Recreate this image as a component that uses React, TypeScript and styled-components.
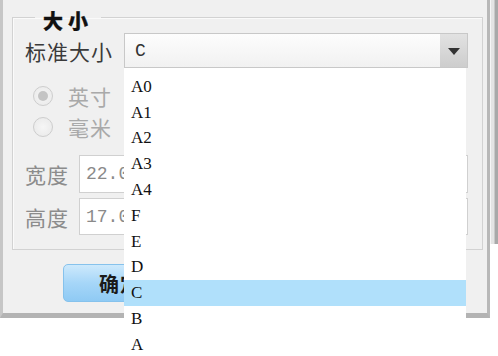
import React from "react";
import styled, { createGlobalStyle } from "styled-components";

const GlobalStyle = createGlobalStyle`
  html, body { margin: 0; padding: 0; background: #ffffff; }
  body { font-family: "Noto Sans CJK SC", "Noto Sans", sans-serif; }
  * { box-sizing: border-box; }
`;

const Page = styled.div`
  position: relative;
  width: 498px;
  height: 356px;
  overflow: hidden;
  background: #ffffff;
  display: flex;
  align-items: flex-start;
`;

const Dialog = styled.div`
  width: 490px;
  height: 318px;
  flex: none;
  background: #f0f0f0;
  border-left: 3px solid #c6c6c6;
  border-right: 3px solid #b8b8b8;
  border-bottom: 5px solid #b3b3b3;
  padding: 3px 4px 0 9px;
  display: flex;
  flex-direction: column;
`;

const BackFrame = styled.div`
  width: 8px;
  height: 244px;
  flex: none;
  background: linear-gradient(90deg, #f6f6f6 0 1px, #e4e4e4 1px 4px, #c9c9c9 4px 5px, #a9a9a9 5px);
`;

const Group = styled.fieldset`
  margin: 0;
  border: 1px solid #d2d2d2;
  box-shadow: inset 1px 1px 0 #fafafa;
  padding: 2px 14px 14px 12px;
  display: flex;
  flex-direction: column;
  min-width: 0;
`;

const Legend = styled.legend`
  margin-left: 10px;
  padding: 8px 8px 0 8px;
  font-size: 20px;
  line-height: 20px;
  font-weight: 900;
  letter-spacing: 5px;
  color: #111;
  -webkit-text-stroke: 0.3px #111;
`;

const Row = styled.div<{ $h: number; $mt?: number }>`
  display: flex;
  align-items: center;
  height: ${(p) => p.$h}px;
  margin-top: ${(p) => p.$mt ?? 0}px;
`;

const Label = styled.span<{ $w: number; $muted?: boolean }>`
  width: ${(p) => p.$w}px;
  flex: none;
  font-size: 21px;
  letter-spacing: 1px;
  color: ${(p) => (p.$muted ? "#8c8c8c" : "#3a3a3a")};
  white-space: nowrap;
`;

const Combo = styled.div`
  flex: 1;
  height: 100%;
  display: flex;
  border: 1px solid #c8c8c8;
  background: linear-gradient(#fdfdfd, #f1f1f1);
`;

const ComboValue = styled.span`
  flex: 1;
  padding-left: 10px;
  display: flex;
  align-items: center;
  font-family: "Liberation Mono", monospace;
  font-size: 18px;
  color: #333;
`;

const ComboButton = styled.span`
  width: 27px;
  flex: none;
  display: flex;
  align-items: center;
  justify-content: center;
  background: linear-gradient(#e2e2e2, #cdcdcd);
`;

const Arrow = styled.span`
  width: 0;
  height: 0;
  border-left: 6px solid transparent;
  border-right: 6px solid transparent;
  border-top: 7px solid #333;
  margin-top: 2px;
`;

const RadioRow = styled.label`
  display: flex;
  align-items: center;
  height: 31px;
  padding-left: 8px;
  gap: 15px;
`;

const RadioCircle = styled.span<{ $checked?: boolean }>`
  width: 20px;
  height: 20px;
  flex: none;
  border-radius: 50%;
  border: 1px solid #cdcdcd;
  background: radial-gradient(circle, #f6f6f6 0%, #e8e8e8 100%);
  display: flex;
  align-items: center;
  justify-content: center;
  &::after {
    content: "";
    width: 10px;
    height: 10px;
    border-radius: 50%;
    background: ${(p) => (p.$checked ? "#c4c4c4" : "transparent")};
  }
`;

const RadioText = styled.span`
  font-size: 21px;
  letter-spacing: 1px;
  color: #a9a9a9;
`;

const Field = styled.div`
  flex: 1;
  height: 100%;
  border: 1px solid #d0d0d0;
  background: #ffffff;
  padding-left: 6px;
  display: flex;
  align-items: center;
  font-family: "Liberation Mono", monospace;
  font-size: 18px;
  color: #8a8a8a;
`;

const ButtonBar = styled.div`
  display: flex;
  gap: 18px;
  padding-left: 51px;
  margin-top: 14px;
`;

const Button = styled.button`
  width: 114px;
  height: 38px;
  border: 1px solid #86c2ec;
  border-radius: 5px;
  background: linear-gradient(#cde9fc, #a6d6f8 50%, #8fcaf4);
  font-family: "Noto Sans CJK SC", sans-serif;
  font-size: 20px;
  font-weight: 700;
  color: #1a1a1a;
  letter-spacing: 1px;
  padding: 0;
`;

const List = styled.ul`
  position: absolute;
  left: 124px;
  top: 68px;
  width: 342px;
  height: 300px;
  margin: 0;
  padding: 6px 0 0 0;
  list-style: none;
  background: #ffffff;
`;

const Item = styled.li<{ $selected?: boolean }>`
  height: 25.8px;
  padding-left: 7px;
  display: flex;
  align-items: center;
  font-family: "Liberation Serif", serif;
  font-size: 17px;
  color: #111;
  background: ${(p) => (p.$selected ? "#b0e0fb" : "transparent")};
`;

const sizes = ["A0", "A1", "A2", "A3", "A4", "F", "E", "D", "C", "B", "A"];

export default function App() {
  return (
    <>
      <GlobalStyle />
      <Page>
        <Dialog>
          <Group>
            <Legend>大小</Legend>
            <Row $h={35}>
              <Label $w={99}>标准大小</Label>
              <Combo>
                <ComboValue>C</ComboValue>
                <ComboButton>
                  <Arrow />
                </ComboButton>
              </Combo>
            </Row>
            <Row $h={12} />
            <RadioRow>
              <RadioCircle $checked />
              <RadioText>英寸</RadioText>
            </RadioRow>
            <RadioRow>
              <RadioCircle />
              <RadioText>毫米</RadioText>
            </RadioRow>
            <Row $h={38} $mt={13}>
              <Label $w={54} $muted>宽度</Label>
              <Field>22.00</Field>
            </Row>
            <Row $h={37} $mt={5}>
              <Label $w={54} $muted>高度</Label>
              <Field>17.00</Field>
            </Row>
          </Group>
          <ButtonBar>
            <Button>确定</Button>
            <Button>取消</Button>
          </ButtonBar>
        </Dialog>
        <BackFrame />
        <List>
          {sizes.map((s) => (
            <Item key={s} $selected={s === "C"}>
              {s}
            </Item>
          ))}
        </List>
      </Page>
    </>
  );
}
